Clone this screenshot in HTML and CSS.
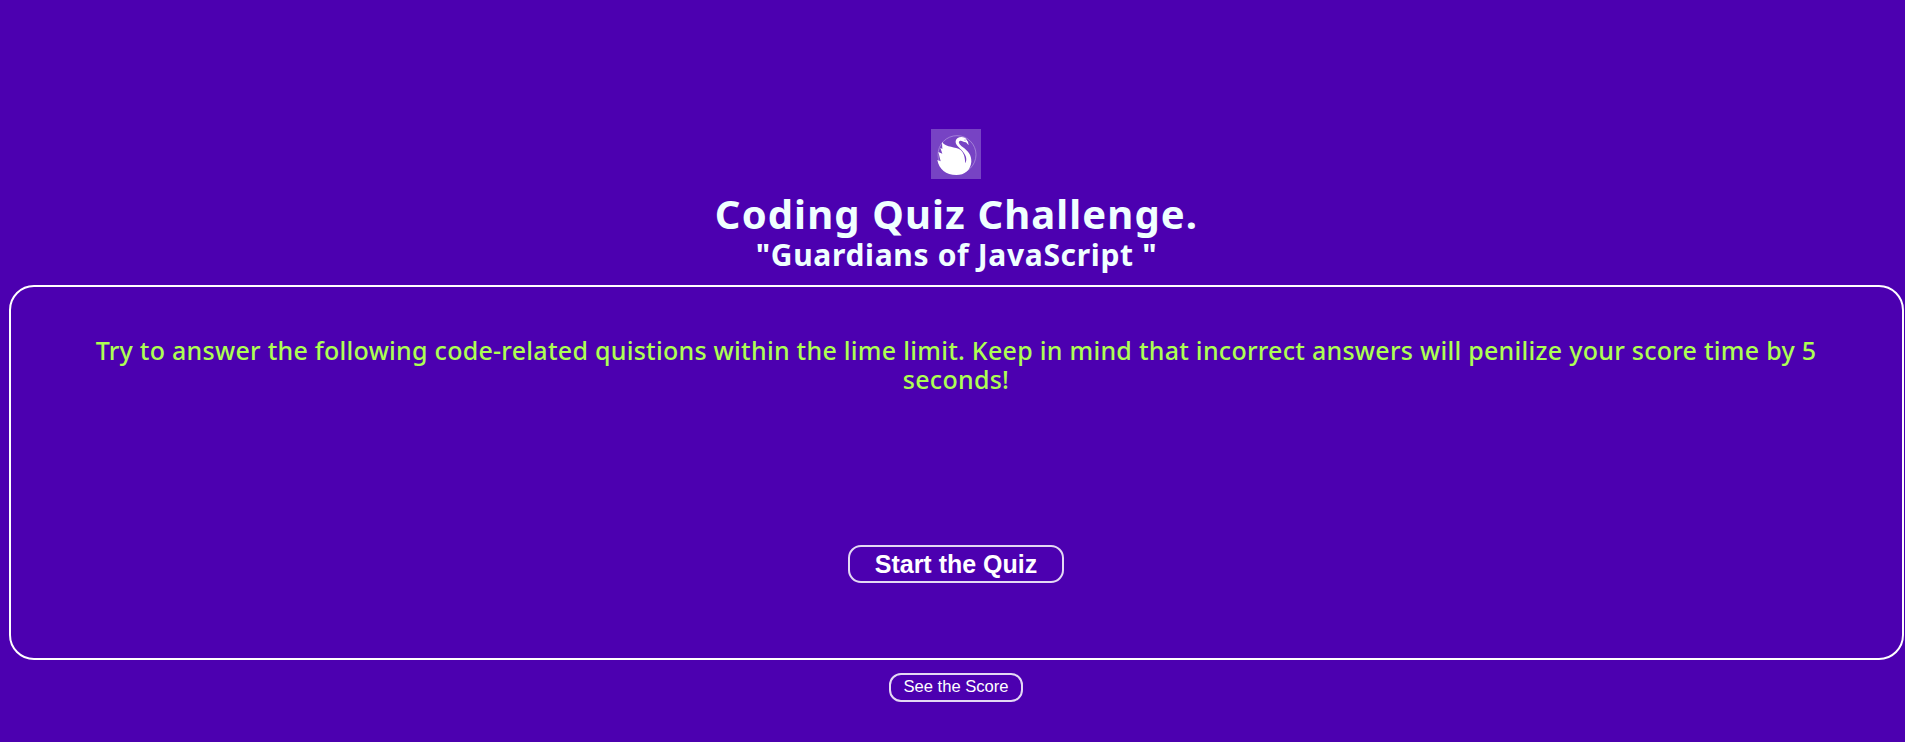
FILE: index.html
```html
<!DOCTYPE html>
<html lang="en">
<head>
<meta charset="utf-8">
<title>Coding Quiz Challenge</title>
<link rel="stylesheet" href="styles.css">
</head>
<body>
<header class="header">
  <svg class="logo" viewBox="0 0 150 150" aria-hidden="true">
    <circle class="logo-ring" cx="78" cy="77" r="57"/>
    <path class="logo-swan" d="M33 39C46 57 74 52 89 63C99 72 102 85 103 103C110 89 104 76 91 62C80 51 73 46 74 36C76 25 90 21 101 26C107 29 107 34 111 38L113 49L105 40C98 41 92 33 86 36C80 40 86 47 95 54C112 67 122 78 121 98C119 123 101 138 76 138C45 138 24 121 19 93L29 97L22 69L34 74L28 56L34 60Z"/>
    <circle class="logo-eye" cx="102" cy="33" r="1.5"/>
  </svg>
  <h1 class="title">Coding Quiz Challenge.</h1>
  <h2 class="subtitle">"Guardians of JavaScript "</h2>
</header>
<main class="quiz">
  <p class="intro">Try to answer the following code-related quistions within the lime limit. Keep in mind that incorrect answers will penilize your score time by 5<br>seconds!</p>
  <button class="btn start">Start the Quiz</button>
</main>
<footer class="footer"><button class="btn score">See the Score</button></footer>
</body>
</html>
```
FILE: styles.css
```css
* { box-sizing: border-box; margin: 0; padding: 0; }
body {
  height: 742px;
  overflow: hidden;
  background: #4c00b0;
  color: azure;
  font-family: "Noto Sans", "Open Sans", sans-serif;
}
.header {
  display: flex;
  flex-direction: column;
  align-items: center;
  height: 285px;
  padding: 129px 0 0 7px;
}
.logo { width: 50px; height: 50px; background: #7743c4; }
.logo-ring { fill: none; stroke: #b79de0; stroke-width: 2; }
.logo-swan { fill: #fff; }
.logo-eye { fill: #7743c4; }
.title {
  margin-top: 12px;
  padding-left: 1px;
  font-size: 40px;
  line-height: 46px;
  letter-spacing: 1.1px;
  white-space: pre;
}
.subtitle {
  padding-left: 1px;
  font-size: 30px;
  line-height: 35px;
  letter-spacing: 0.66px;
  white-space: pre;
}
.quiz {
  display: flex;
  flex-direction: column;
  align-items: center;
  height: 375px;
  margin: 0 1px 0 9px;
  padding: 49px 1px 0 0;
  border: 2px solid #fff;
  border-radius: 25px;
}
.intro {
  color: #adff52;
  font-size: 25px;
  font-weight: 500;
  line-height: 29px;
  letter-spacing: 0.27px;
  text-align: center;
  white-space: nowrap;
}
.btn {
  border: 2px solid #e4d9f4;
  background: transparent;
  color: #fff;
  font-family: "Liberation Sans", Arial, sans-serif;
}
.start {
  width: 216px;
  height: 38px;
  margin-top: 151px;
  border-radius: 13px;
  font-size: 25px;
  font-weight: 700;
}
.footer { display: flex; justify-content: center; padding: 13px 0 0 7px; }
.score {
  width: 134px;
  height: 29px;
  padding-bottom: 2px;
  border-radius: 12px;
  font-size: 16.6px;
}
```
